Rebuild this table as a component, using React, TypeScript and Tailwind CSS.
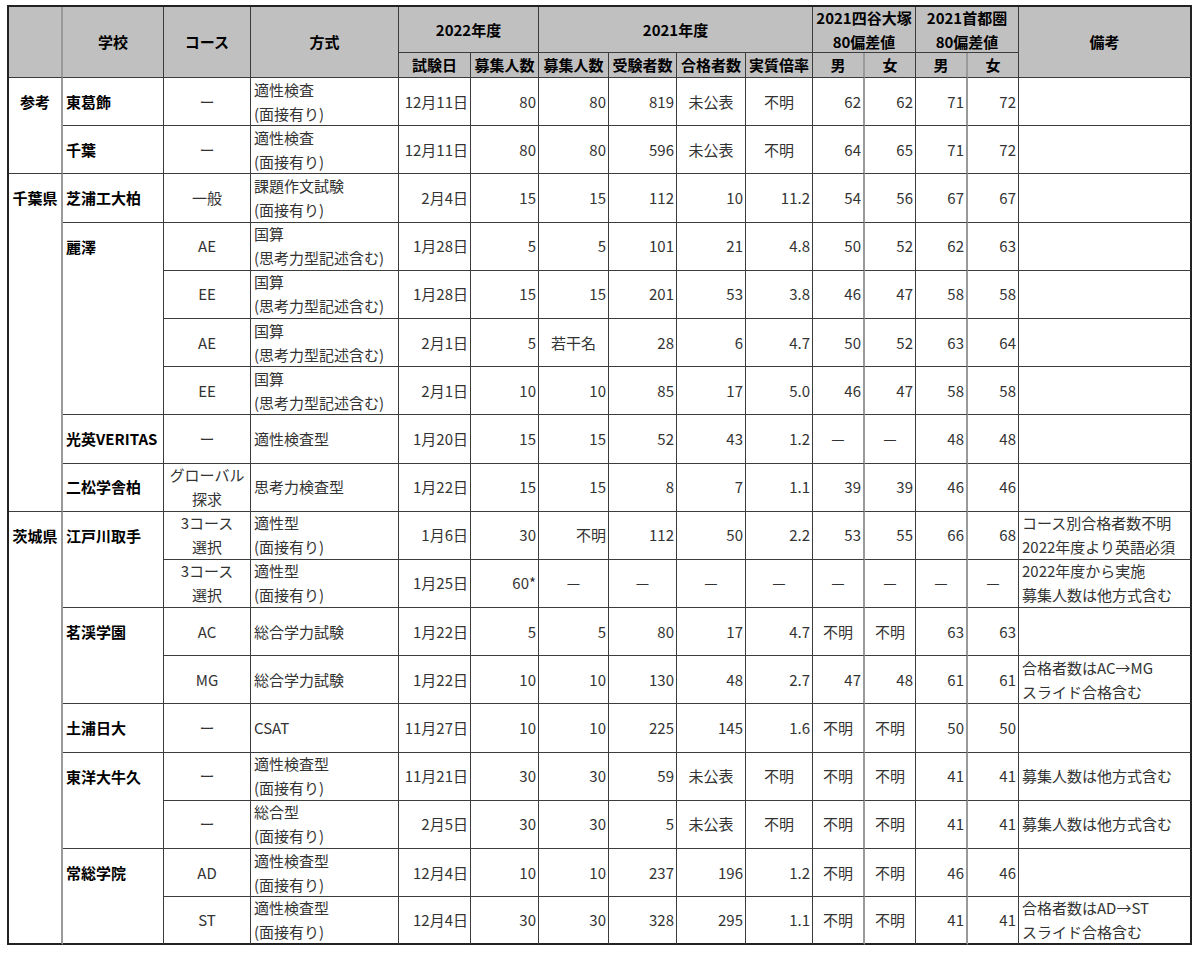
import React from "react";

type Align = "l" | "c" | "r";
type Cell = { t: string | string[]; a: Align; b?: boolean };

const D = "ー";
const M = "—";

type Row = {
  pref?: string;
  school?: string;
  prefEnd: boolean;
  schoolEnd: boolean;
  course: string | string[];
  method: string[];
  date: string;
  cap22: string;
  cap21: string;
  exam: string;
  pass: string;
  ratio: string;
  ym: string;
  yf: string;
  sm: string;
  sf: string;
  note?: string[];
};

const R = (o: Partial<Row> & Pick<Row, "course" | "method" | "date" | "cap22" | "cap21" | "exam" | "pass" | "ratio" | "ym" | "yf" | "sm" | "sf">): Row => ({
  prefEnd: false,
  schoolEnd: true,
  ...o,
});

const K = ["適性検査", "(面接有り)"];
const KS = ["国算", "(思考力型記述含む)"];

const rows: Row[] = [
  R({ pref: "参考", school: "東葛飾", course: D, method: K, date: "12月11日", cap22: "80", cap21: "80", exam: "819", pass: "未公表", ratio: "不明", ym: "62", yf: "62", sm: "71", sf: "72" }),
  R({ school: "千葉", prefEnd: true, course: D, method: K, date: "12月11日", cap22: "80", cap21: "80", exam: "596", pass: "未公表", ratio: "不明", ym: "64", yf: "65", sm: "71", sf: "72" }),
  R({ pref: "千葉県", school: "芝浦工大柏", course: "一般", method: ["課題作文試験", "(面接有り)"], date: "2月4日", cap22: "15", cap21: "15", exam: "112", pass: "10", ratio: "11.2", ym: "54", yf: "56", sm: "67", sf: "67" }),
  R({ school: "麗澤", schoolEnd: false, course: "AE", method: KS, date: "1月28日", cap22: "5", cap21: "5", exam: "101", pass: "21", ratio: "4.8", ym: "50", yf: "52", sm: "62", sf: "63" }),
  R({ schoolEnd: false, course: "EE", method: KS, date: "1月28日", cap22: "15", cap21: "15", exam: "201", pass: "53", ratio: "3.8", ym: "46", yf: "47", sm: "58", sf: "58" }),
  R({ schoolEnd: false, course: "AE", method: KS, date: "2月1日", cap22: "5", cap21: "若干名", exam: "28", pass: "6", ratio: "4.7", ym: "50", yf: "52", sm: "63", sf: "64" }),
  R({ course: "EE", method: KS, date: "2月1日", cap22: "10", cap21: "10", exam: "85", pass: "17", ratio: "5.0", ym: "46", yf: "47", sm: "58", sf: "58" }),
  R({ school: "光英VERITAS", course: D, method: ["適性検査型"], date: "1月20日", cap22: "15", cap21: "15", exam: "52", pass: "43", ratio: "1.2", ym: M, yf: M, sm: "48", sf: "48" }),
  R({ school: "二松学舎柏", prefEnd: true, course: ["グローバル", "探求"], method: ["思考力検査型"], date: "1月22日", cap22: "15", cap21: "15", exam: "8", pass: "7", ratio: "1.1", ym: "39", yf: "39", sm: "46", sf: "46" }),
  R({ pref: "茨城県", school: "江戸川取手", schoolEnd: false, course: ["3コース", "選択"], method: ["適性型", "(面接有り)"], date: "1月6日", cap22: "30", cap21: "不明", exam: "112", pass: "50", ratio: "2.2", ym: "53", yf: "55", sm: "66", sf: "68", note: ["コース別合格者数不明", "2022年度より英語必須"] }),
  R({ course: ["3コース", "選択"], method: ["適性型", "(面接有り)"], date: "1月25日", cap22: "60*", cap21: M, exam: M, pass: M, ratio: M, ym: M, yf: M, sm: M, sf: M, note: ["2022年度から実施", "募集人数は他方式含む"] }),
  R({ school: "茗渓学園", schoolEnd: false, course: "AC", method: ["総合学力試験"], date: "1月22日", cap22: "5", cap21: "5", exam: "80", pass: "17", ratio: "4.7", ym: "不明", yf: "不明", sm: "63", sf: "63" }),
  R({ course: "MG", method: ["総合学力試験"], date: "1月22日", cap22: "10", cap21: "10", exam: "130", pass: "48", ratio: "2.7", ym: "47", yf: "48", sm: "61", sf: "61", note: ["合格者数はAC→MG", "スライド合格含む"] }),
  R({ school: "土浦日大", course: D, method: ["CSAT"], date: "11月27日", cap22: "10", cap21: "10", exam: "225", pass: "145", ratio: "1.6", ym: "不明", yf: "不明", sm: "50", sf: "50" }),
  R({ school: "東洋大牛久", schoolEnd: false, course: D, method: ["適性検査型", "(面接有り)"], date: "11月21日", cap22: "30", cap21: "30", exam: "59", pass: "未公表", ratio: "不明", ym: "不明", yf: "不明", sm: "41", sf: "41", note: ["募集人数は他方式含む"] }),
  R({ course: D, method: ["総合型", "(面接有り)"], date: "2月5日", cap22: "30", cap21: "30", exam: "5", pass: "未公表", ratio: "不明", ym: "不明", yf: "不明", sm: "41", sf: "41", note: ["募集人数は他方式含む"] }),
  R({ school: "常総学院", schoolEnd: false, course: "AD", method: ["適性検査型", "(面接有り)"], date: "12月4日", cap22: "10", cap21: "10", exam: "237", pass: "196", ratio: "1.2", ym: "不明", yf: "不明", sm: "46", sf: "46" }),
  R({ course: "ST", method: ["適性検査型", "(面接有り)"], date: "12月4日", cap22: "30", cap21: "30", exam: "328", pass: "295", ratio: "1.1", ym: "不明", yf: "不明", sm: "41", sf: "41", note: ["合格者数はAD→ST", "スライド合格含む"] }),
];

const isNum = (s: string) => /^[0-9.*]+$/.test(s);

const numAlign = (s: string): Align => (isNum(s) ? "r" : "c");

const alignCls: Record<Align, string> = {
  l: "justify-start text-left pl-[3px]",
  c: "justify-center text-center",
  r: "justify-end text-right pr-[2px]",
};

// column right border styles
const colRight = [
  "border-r-2 border-r-[#9a9a9a]",
  "border-r border-r-[#3c3c3c]",
  "border-r border-r-[#3c3c3c]",
  "border-r border-r-[#3c3c3c]",
  "border-r border-r-[#3c3c3c]",
  "border-r border-r-[#3c3c3c]",
  "border-r border-r-[#3c3c3c]",
  "border-r border-r-[#3c3c3c]",
  "border-r border-r-[#3c3c3c]",
  "border-r border-r-[#3c3c3c]",
  "border-r-2 border-r-[#9a9a9a]",
  "border-r border-r-[#3c3c3c]",
  "border-r-2 border-r-[#9a9a9a]",
  "border-r border-r-[#3c3c3c]",
  "border-r-2 border-r-[#222222]",
];

function DataCell({ cell, col, bottom, last }: { cell: Cell; col: number; bottom: boolean; last: boolean }) {
  const lines = Array.isArray(cell.t) ? cell.t : [cell.t];
  const bcls = last
    ? "border-b-2 border-b-[#222222]"
    : bottom
    ? "border-b border-b-[#3c3c3c]"
    : "";
  return (
    <div
      className={`flex items-center ${alignCls[cell.a]} ${colRight[col]} ${bcls} bg-white overflow-hidden whitespace-nowrap`}
    >
      <div className={`leading-[24px] ${cell.b ? "font-bold text-black" : "text-[#333333]"}`}>
        {lines.map((l, i) => (
          <div key={i}>{l}</div>
        ))}
      </div>
    </div>
  );
}

function H({ children, cls }: { children: React.ReactNode; cls: string }) {
  return (
    <div
      className={`flex items-center justify-center text-center font-bold text-black bg-[#c0c0c0] leading-[24px] ${cls}`}
    >
      <div>{children}</div>
    </div>
  );
}

export default function App() {
  const bd = "border-r border-r-[#3c3c3c] border-b border-b-[#3c3c3c]";
  return (
    <div className="min-h-[954px] w-[1200px] bg-white pt-[5px] pl-[7px]">
      <div
        className="grid w-fit border-l-2 border-t-2 border-l-[#222222] border-t-[#222222] text-[15px]"
        style={{ fontFamily: '"Noto Sans CJK JP", "Noto Sans", sans-serif' }}
      >
        <div className="grid grid-cols-[54px_101px_87px_148px_72px_68px_70px_68px_69px_67px_52px_51px_52px_51px_173px] grid-rows-[46px_25px_repeat(18,48.2px)]">
          <H cls="row-span-2 border-r-2 border-r-[#9a9a9a] border-b border-b-[#3c3c3c]"> </H>
          <H cls={`row-span-2 ${bd}`}>学校</H>
          <H cls={`row-span-2 ${bd}`}>コース</H>
          <H cls={`row-span-2 ${bd}`}>方式</H>
          <H cls={`col-span-2 ${bd}`}>2022年度</H>
          <H cls={`col-span-4 ${bd}`}>2021年度</H>
          <H cls={`col-span-2 ${bd}`}>
            <div>2021四谷大塚</div>
            <div>80偏差値</div>
          </H>
          <H cls={`col-span-2 ${bd}`}>
            <div>2021首都圏</div>
            <div>80偏差値</div>
          </H>
          <H cls="row-span-2 border-r-2 border-r-[#222222] border-b border-b-[#3c3c3c]">備考</H>
          <H cls={bd}>試験日</H>
          <H cls={bd}>募集人数</H>
          <H cls={bd}>募集人数</H>
          <H cls={bd}>受験者数</H>
          <H cls={bd}>合格者数</H>
          <H cls={bd}>実質倍率</H>
          <H cls="border-r-2 border-r-[#9a9a9a] border-b border-b-[#3c3c3c]">男</H>
          <H cls={bd}>女</H>
          <H cls="border-r-2 border-r-[#9a9a9a] border-b border-b-[#3c3c3c]">男</H>
          <H cls={bd}>女</H>

          {rows.map((r, ri) => {
            const last = ri === rows.length - 1;
            const cap21Align: Align = r.cap21 === "不明" ? "r" : numAlign(r.cap21);
            const cells: Cell[] = [
              { t: r.pref ?? "", a: "c", b: true },
              { t: r.school ?? "", a: "l", b: true },
              { t: r.course, a: "c" },
              { t: r.method, a: "l" },
              { t: r.date, a: "r" },
              { t: r.cap22, a: numAlign(r.cap22) },
              { t: r.cap21, a: cap21Align },
              { t: r.exam, a: numAlign(r.exam) },
              { t: r.pass, a: numAlign(r.pass) },
              { t: r.ratio, a: numAlign(r.ratio) },
              { t: r.ym, a: numAlign(r.ym) },
              { t: r.yf, a: numAlign(r.yf) },
              { t: r.sm, a: numAlign(r.sm) },
              { t: r.sf, a: numAlign(r.sf) },
              { t: r.note ?? "", a: "l" },
            ];
            return cells.map((c, ci) => (
              <DataCell
                key={`${ri}-${ci}`}
                cell={c}
                col={ci}
                last={last}
                bottom={ci === 0 ? r.prefEnd : ci === 1 ? r.schoolEnd || r.prefEnd : true}
              />
            ));
          })}
        </div>
      </div>
    </div>
  );
}
